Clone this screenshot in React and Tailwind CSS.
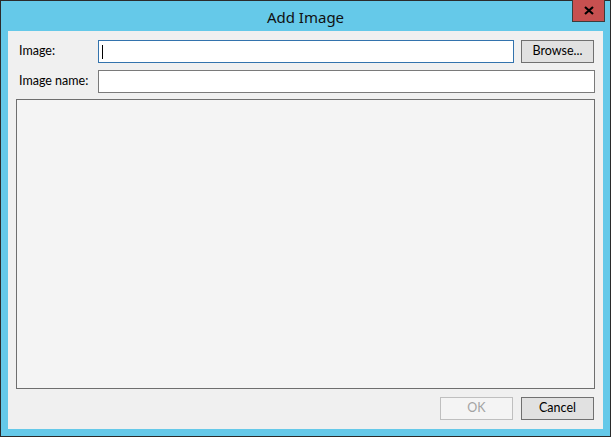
import React from 'react';

// Win8-style "Add Image" dialog
const font = { fontFamily: '"Noto Sans", "Open Sans", sans-serif' };
const body = { fontFamily: 'Lato, "Noto Sans", sans-serif' };

const Button = ({ children, disabled }) => (
  <button
    disabled={disabled}
    style={body}
    className={
      disabled
        ? 'w-[73px] h-[23px] border border-[#bfbfbf] bg-[#f4f4f4] text-[#a3a3a3] text-[12.5px] leading-none'
        : 'w-[73px] h-[23px] border border-[#707070] bg-[#e1e1e1] text-black text-[12.5px] leading-none'
    }
  >
    {children}
  </button>
);

export default function App() {
  return (
    <div style={font} className="w-[611px] h-[437px] border border-[#2b2b2b] bg-[#65c9e9] flex flex-col">
      {/* title bar */}
      <div className="h-[30px] flex items-start relative">
        <div className="flex-1 text-center text-[15px] text-[#111] pt-[5px]">Add Image</div>
        <div className="absolute right-[5px] top-[-1px] w-[33px] h-[22px] bg-[#c75050] border border-[#3c3c3c] border-t-0 flex items-center justify-center">
          <svg width="10" height="9" viewBox="0 0 10 9">
            <path d="M1 1 L9 8 M9 1 L1 8" stroke="#000" strokeWidth="2.2" />
          </svg>
        </div>
      </div>
      {/* client */}
      <div style={body} className="flex-1 mx-[7px] mb-[7px] bg-[#f0f0f0] px-[8px] pt-[9px] pb-[9px] flex flex-col text-[12.5px] text-black">
        <div className="flex items-center h-[23px]">
          <div className="w-[82px] pl-[3px]">Image:</div>
          <div className="flex-1 h-[23px] border border-[#3373ad] bg-white flex items-center pl-[3px]">
            <div className="w-px h-[14px] bg-black" />
          </div>
          <div className="ml-[7px] mr-[1px]">
            <Button>Browse...</Button>
          </div>
        </div>
        <div className="flex items-center h-[23px] mt-[7px]">
          <div className="w-[82px] pl-[3px]">Image name:</div>
          <div className="flex-1 h-[23px] border border-[#7a7a7a] bg-white" />
        </div>
        <div className="flex-1 mt-[6px] border border-[#6e6e6e] bg-[#f4f4f4]" />
        <div className="flex justify-end gap-[8px] mt-[8px] mr-[1px]">
          <Button disabled>OK</Button>
          <Button>Cancel</Button>
        </div>
      </div>
    </div>
  );
}
